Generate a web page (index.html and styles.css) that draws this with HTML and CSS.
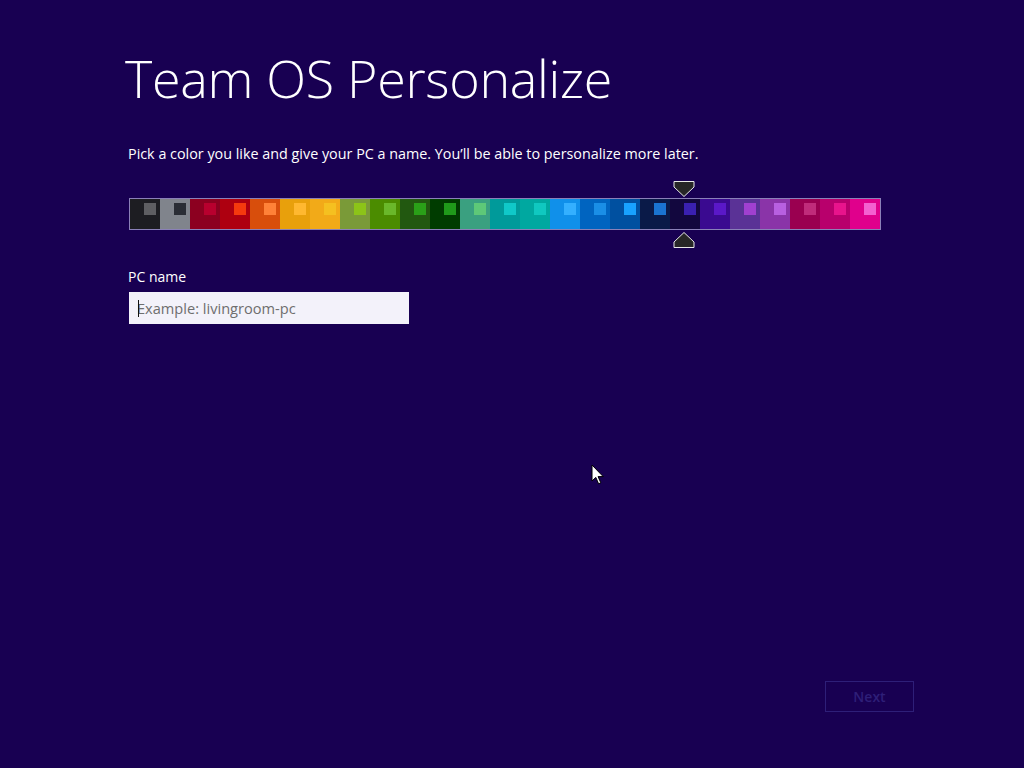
FILE: index.html
```html
<!DOCTYPE html>
<html lang="en">
<head>
<meta charset="utf-8">
<title>Team OS Personalize</title>
<link rel="stylesheet" href="styles.css">
</head>
<body>
<div class="page">
  <main class="content">
    <h1 class="title">Team OS Personalize</h1>
    <p class="subtitle">Pick a color you like and give your PC a name. You’ll be able to personalize more later.</p>
    <div class="picker">
      <div class="bar">
        <div class="sw c0"></div><div class="sw c1"></div><div class="sw c2"></div><div class="sw c3"></div><div class="sw c4"></div>
        <div class="sw c5"></div><div class="sw c6"></div><div class="sw c7"></div><div class="sw c8"></div><div class="sw c9"></div>
        <div class="sw c10"></div><div class="sw c11"></div><div class="sw c12"></div><div class="sw c13"></div><div class="sw c14"></div>
        <div class="sw c15"></div><div class="sw c16"></div><div class="sw c17"></div><div class="sw c18 selected"></div><div class="sw c19"></div>
        <div class="sw c20"></div><div class="sw c21"></div><div class="sw c22"></div><div class="sw c23"></div><div class="sw c24"></div>
      </div>
      <svg class="marker marker-top" width="22" height="16" viewBox="0 0 22 16"><path d="M1 0.5 H21 V6 L11 15.5 L1 6 Z" fill="#262626" stroke="#e8e8e8" stroke-width="1"/></svg>
      <svg class="marker marker-bottom" width="22" height="16" viewBox="0 0 22 16"><path d="M1 15.5 H21 V10 L11 0.5 L1 10 Z" fill="#262626" stroke="#e8e8e8" stroke-width="1"/></svg>
    </div>
    <label class="label" for="pcname">PC name</label>
    <div class="field">
      <span class="caret"></span>
      <input id="pcname" class="input" type="text" placeholder="Example: livingroom-pc">
    </div>
  </main>
  <footer class="footer">
    <button class="next" type="button" disabled>Next</button>
  </footer>
  <svg class="pointer" width="14" height="22" viewBox="0 0 14 22"><path d="M1 1 V17 L4.8 13.4 L7.6 19.8 L9.8 18.8 L7.1 12.6 H12.2 Z" fill="#ffffff" stroke="#000000" stroke-width="1" stroke-linejoin="round"/></svg>
</div>
</body>
</html>
```

FILE: styles.css
```css
* { box-sizing: border-box; }
html, body { margin: 0; padding: 0; }
body {
  background: #180052;
  font-family: "Open Sans", "Noto Sans", "Liberation Sans", sans-serif;
  color: #ffffff;
}
.page {
  position: relative;
  width: 1024px;
  height: 768px;
  display: flex;
  flex-direction: column;
  overflow: hidden;
}
.content {
  padding: 42px 0 0 128px;
}
.title {
  margin: 0 0 0 -3px;
  font-weight: 300;
  font-size: 52px;
  line-height: 72px;
  letter-spacing: -0.3px;
  color: #ffffff;
}
.subtitle {
  margin: 30px 0 0 0;
  font-size: 14.35px;
  line-height: 20px;
  color: #ffffff;
}
.picker {
  position: relative;
  margin: 34px 0 0 1px;
  width: 752px;
}
.bar {
  display: flex;
  border: 1px solid #8a80b8;
  width: 752px;
  height: 32px;
}
.sw {
  position: relative;
  width: 30px;
  height: 30px;
  background: var(--bg);
}
.sw::after {
  content: "";
  position: absolute;
  left: 14px;
  top: 4px;
  width: 12px;
  height: 12px;
  background: var(--sq);
}
.c0 { --bg: #1d1d22; --sq: #5e5e62; }
.c1 { --bg: #80848c; --sq: #2a2d35; }
.c2 { --bg: #8c0020; --sq: #b8002e; }
.c3 { --bg: #ae0010; --sq: #f53a0e; }
.c4 { --bg: #d84e0c; --sq: #ff8238; }
.c5 { --bg: #e8a00c; --sq: #ffb830; }
.c6 { --bg: #f2aa18; --sq: #f5c020; }
.c7 { --bg: #7a9a38; --sq: #8cc418; }
.c8 { --bg: #4b8c00; --sq: #6ab82a; }
.c9 { --bg: #225810; --sq: #2aa018; }
.c10 { --bg: #003c00; --sq: #1f9a1a; }
.c11 { --bg: #3aa080; --sq: #5ec878; }
.c12 { --bg: #009a9a; --sq: #10c8c8; }
.c13 { --bg: #00a8a0; --sq: #10c8c0; }
.c14 { --bg: #1090ea; --sq: #34b0ff; }
.c15 { --bg: #0064c0; --sq: #1a8ee6; }
.c16 { --bg: #0050a0; --sq: #18a2ff; }
.c17 { --bg: #0a1a48; --sq: #1a74d0; }
.c18 { --bg: #12073e; --sq: #3a20b0; }
.c19 { --bg: #3a0a90; --sq: #5a18c8; }
.c20 { --bg: #5a3296; --sq: #a040d0; }
.c21 { --bg: #8a34a8; --sq: #b860e0; }
.c22 { --bg: #9a0050; --sq: #c02c7a; }
.c23 { --bg: #b8006c; --sq: #e8148c; }
.c24 { --bg: #e0008c; --sq: #f460d0; }
.marker {
  position: absolute;
  left: 544px;
  display: block;
}
.marker-top { top: -17px; }
.marker-bottom { top: 34px; }
.label {
  display: block;
  margin: 37px 0 0 0;
  font-size: 14px;
  line-height: 20px;
  color: #ffffff;
}
.field {
  position: relative;
  margin: 5px 0 0 1px;
  width: 280px;
  height: 32px;
}
.input {
  display: block;
  width: 280px;
  height: 32px;
  border: none;
  outline: none;
  background: #f3f2fa;
  padding: 0 0 0 8px;
  font-family: "Open Sans", "Noto Sans", "Liberation Sans", sans-serif;
  font-size: 14.6px;
  color: #222222;
}
.input::placeholder { color: #6e6e6e; opacity: 1; }
.caret {
  position: absolute;
  left: 9px;
  top: 8px;
  width: 1px;
  height: 17px;
  background: #111111;
  z-index: 1;
}
.footer {
  margin-top: auto;
  display: flex;
  justify-content: flex-end;
  padding: 0 110px 56px 0;
}
.next {
  width: 89px;
  height: 31px;
  background: transparent;
  border: 1px solid #2e1f78;
  color: #2e1f78;
  font-family: "Open Sans", "Noto Sans", "Liberation Sans", sans-serif;
  font-size: 14px;
  font-weight: 600;
  padding: 0;
}
.pointer {
  position: absolute;
  left: 591px;
  top: 464px;
}
```
